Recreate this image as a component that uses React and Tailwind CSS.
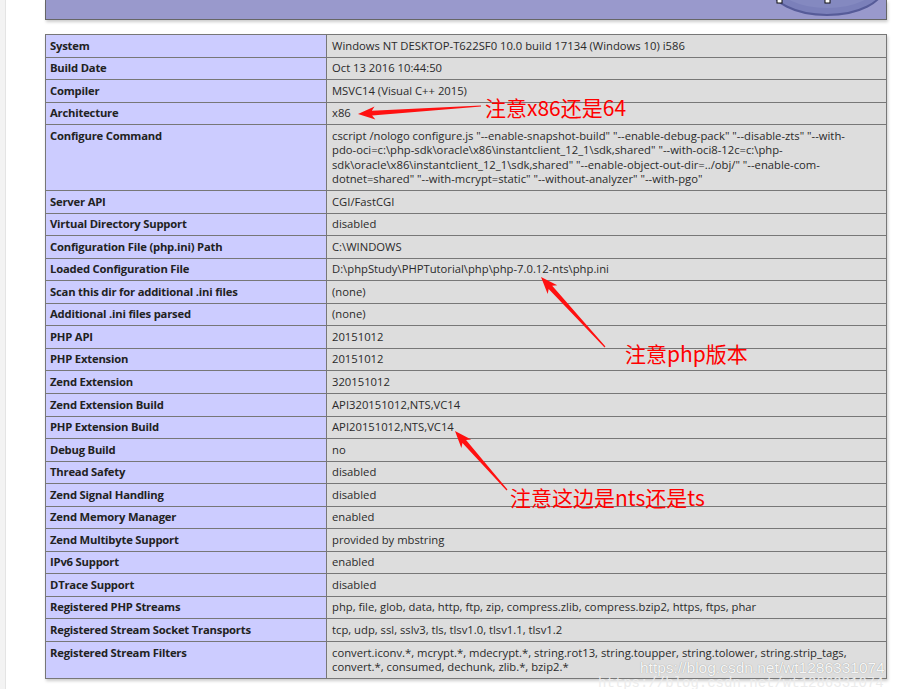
import React from "react";

const rows = [
  ["System", "Windows NT DESKTOP-T622SF0 10.0 build 17134 (Windows 10) i586"],
  ["Build Date", "Oct 13 2016 10:44:50"],
  ["Compiler", "MSVC14 (Visual C++ 2015)"],
  ["Architecture", "x86"],
  [
    "Configure Command",
    [
      'cscript /nologo configure.js "--enable-snapshot-build" "--enable-debug-pack" "--disable-zts" "--with-',
      'pdo-oci=c:\\php-sdk\\oracle\\x86\\instantclient_12_1\\sdk,shared" "--with-oci8-12c=c:\\php-',
      'sdk\\oracle\\x86\\instantclient_12_1\\sdk,shared" "--enable-object-out-dir=../obj/" "--enable-com-',
      'dotnet=shared" "--with-mcrypt=static" "--without-analyzer" "--with-pgo"',
    ],
  ],
  ["Server API", "CGI/FastCGI"],
  ["Virtual Directory Support", "disabled"],
  ["Configuration File (php.ini) Path", "C:\\WINDOWS"],
  ["Loaded Configuration File", "D:\\phpStudy\\PHPTutorial\\php\\php-7.0.12-nts\\php.ini"],
  ["Scan this dir for additional .ini files", "(none)"],
  ["Additional .ini files parsed", "(none)"],
  ["PHP API", "20151012"],
  ["PHP Extension", "20151012"],
  ["Zend Extension", "320151012"],
  ["Zend Extension Build", "API320151012,NTS,VC14"],
  ["PHP Extension Build", "API20151012,NTS,VC14"],
  ["Debug Build", "no"],
  ["Thread Safety", "disabled"],
  ["Zend Signal Handling", "disabled"],
  ["Zend Memory Manager", "enabled"],
  ["Zend Multibyte Support", "provided by mbstring"],
  ["IPv6 Support", "enabled"],
  ["DTrace Support", "disabled"],
  ["Registered PHP Streams", "php, file, glob, data, http, ftp, zip, compress.zlib, compress.bzip2, https, ftps, phar"],
  ["Registered Stream Socket Transports", "tcp, udp, ssl, sslv3, tls, tlsv1.0, tlsv1.1, tlsv1.2"],
  [
    "Registered Stream Filters",
    [
      "convert.iconv.*, mcrypt.*, mdecrypt.*, string.rot13, string.toupper, string.tolower, string.strip_tags,",
      "convert.*, consumed, dechunk, zlib.*, bzip2.*",
    ],
  ],
];

// red screenshot-tool arrow, tail -> tip
function Arrow({ from, to }) {
  const [x1, y1] = from;
  const [x2, y2] = to;
  const len = Math.hypot(x2 - x1, y2 - y1);
  const ux = (x2 - x1) / len;
  const uy = (y2 - y1) / len;
  const nx = -uy;
  const ny = ux;
  const hl = 17, hw = 6.5, sw = 2.4, tw = 0.6;
  const bx = x2 - ux * hl;
  const by = y2 - uy * hl;
  const mx = bx + ux * 3;
  const my = by + uy * 3;
  const p = [
    [x1 + nx * tw, y1 + ny * tw],
    [mx + nx * sw, my + ny * sw],
    [bx + nx * hw, by + ny * hw],
    [x2, y2],
    [bx - nx * hw, by - ny * hw],
    [mx - nx * sw, my - ny * sw],
    [x1 - nx * tw, y1 - ny * tw],
  ];
  return <polygon points={p.map((q) => q.join(",")).join(" ")} fill="#ff1010" />;
}

export default function App() {
  return (
    <div className="relative w-[901px] h-[689px] overflow-hidden bg-white flex font-['Open_Sans',sans-serif] text-[#222]">
      {/* left gutter */}
      <div className="w-[6px] shrink-0 bg-[#f3f3f3] border-r border-[#e4e4e4]" />

      <div className="pl-[39px]">
        {/* header bar with logo */}
        <div className="relative w-[842px] h-[20px] bg-[#9999cc] border border-t-0 border-[#666] [box-shadow:1px_2px_3px_#ccc]">
          <svg className="absolute left-[720px] top-0 overflow-visible" width="120" height="20">
            <ellipse cx="61" cy="-14" rx="57" ry="29" fill="#7b80ba" stroke="#565b98" strokeWidth="2" />
            <ellipse cx="61" cy="-16" rx="50" ry="24" fill="#8489c0" />
            <rect x="11" y="-2" width="5" height="5" fill="#fff" stroke="#111" strokeWidth="1" />
            <rect x="59" y="-2" width="5" height="5" fill="#fff" stroke="#111" strokeWidth="1" />
          </svg>
        </div>

        {/* info table */}
        <table className="mt-[14px] w-[842px] border-collapse table-fixed text-[11.25px] leading-[14.45px] [box-shadow:1px_2px_3px_#ccc]">
          <colgroup>
            <col className="w-[281px]" />
            <col />
          </colgroup>
          <tbody>
            {rows.map(([k, v]) => (
              <tr key={k}>
                <td className="border border-[#777] bg-[#ccccff] pl-[4px] pr-[5px] py-[3.56px] align-top font-bold tracking-[-0.2px] whitespace-nowrap">
                  {k}
                </td>
                <td className="border border-[#777] bg-[#dddddd] px-[5px] py-[3.56px] align-top whitespace-nowrap text-[#2a2a2a]">
                  {Array.isArray(v)
                    ? v.map((line, i) => (
                        <div key={i}>{line}</div>
                      ))
                    : v}
                </td>
              </tr>
            ))}
          </tbody>
        </table>
      </div>

      {/* annotations */}
      <svg className="absolute inset-0 pointer-events-none" width="901" height="689">
        <Arrow from={[481, 106]} to={[358, 114]} />
        <Arrow from={[605, 347]} to={[541, 277]} />
        <Arrow from={[507, 490]} to={[455, 431]} />
      </svg>
      <div className="absolute left-[485px] top-[97px] text-[21px] leading-none text-[#ff0000] font-['Noto_Sans_CJK_SC',sans-serif] whitespace-nowrap">
        注意x86还是64
      </div>
      <div className="absolute left-[625px] top-[343px] text-[21px] leading-none text-[#ff0000] font-['Noto_Sans_CJK_SC',sans-serif] whitespace-nowrap">
        注意php版本
      </div>
      <div className="absolute left-[510px] top-[487px] text-[21px] leading-none text-[#ff0000] font-['Noto_Sans_CJK_SC',sans-serif] whitespace-nowrap">
        注意这边是nts还是ts
      </div>

      {/* watermark */}
      <div className="absolute left-[598px] top-[676px] text-[14px] leading-none text-[#ececec] font-['Liberation_Mono',monospace] whitespace-nowrap">
        https://blog.csdn.net/wt1286331074
      </div>
      <div className="absolute left-[640px] top-[660px] text-[15.5px] leading-none text-[#f7f7f7] font-['Liberation_Sans',sans-serif] whitespace-nowrap [text-shadow:0_0_1px_#8a8a8a]">
        https://blog.csdn.net/wt1286331074
      </div>
    </div>
  );
}
